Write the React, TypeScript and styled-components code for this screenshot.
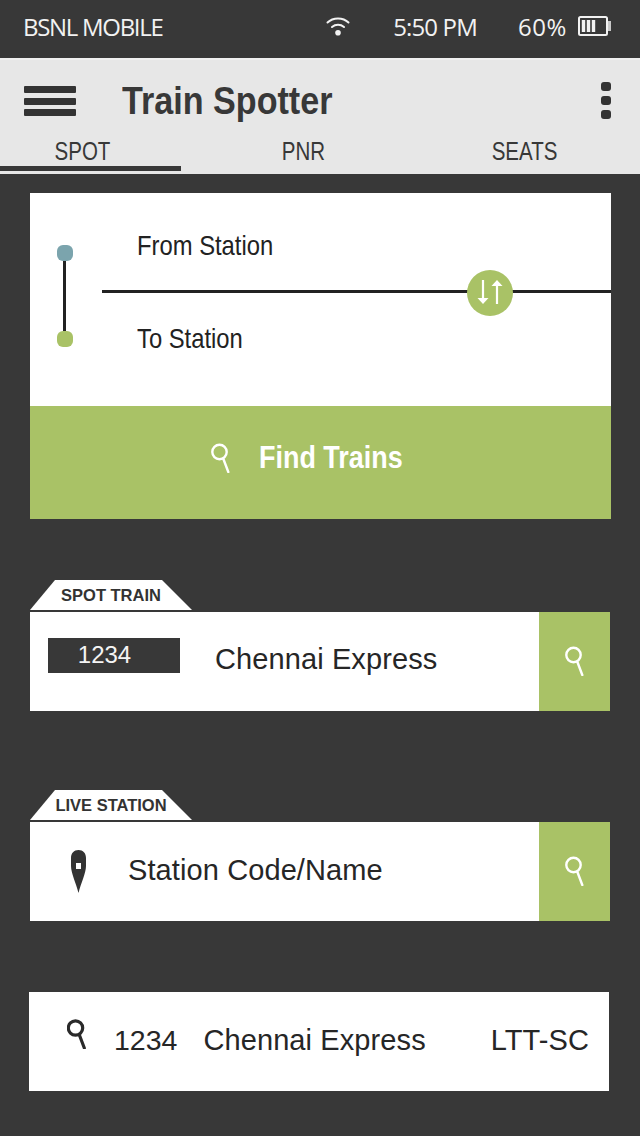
import React from "react";
import styled, { createGlobalStyle } from "styled-components";

const Global = createGlobalStyle`
  html, body { margin: 0; padding: 0; background: #383838; }
  body { font-family: "Liberation Sans", Arial, sans-serif; }
  #root { width: 640px; height: 1136px; overflow: hidden; }
`;

const Page = styled.div`
  width: 640px;
  height: 1136px;
  background: #383838;
  display: flex;
  flex-direction: column;
`;

const StatusBar = styled.div`
  height: 58px;
  display: flex;
  align-items: center;
  padding: 0 29px 6px 23px;
  box-sizing: border-box;
  color: #f2f2f2;
  font-family: "Open Sans", sans-serif;
  font-size: 24px;
`;

const Carrier = styled.span`
  flex: 1;
  letter-spacing: -1.3px;
`;

const StatusText = styled.span<{ $gap: number; $track: number }>`
  margin-left: ${(p) => p.$gap}px;
  letter-spacing: ${(p) => p.$track}px;
`;

const BatteryIcon = styled.svg`
  margin-left: 11px;
`;

const Header = styled.header`
  height: 116px;
  background: #e7e7e7;
  border-top: 2px solid #f0f0f0;
  box-sizing: border-box;
  display: flex;
  flex-direction: column;
`;

const TitleRow = styled.div`
  height: 78px;
  display: flex;
  align-items: center;
  padding: 0 29px 0 24px;
`;

const Burger = styled.div`
  width: 52px;
  height: 30px;
  display: flex;
  flex-direction: column;
  justify-content: space-between;
  margin-top: 4px;
`;

const BurgerBar = styled.span`
  height: 7px;
  background: #333;
  border-radius: 1px;
`;

const Title = styled.h1`
  flex: 1;
  margin: 4px 0 0 46px;
  font-size: 39px;
  line-height: 44px;
  font-weight: 700;
  color: #383838;
  white-space: nowrap;
  transform: scaleX(0.875);
  transform-origin: left center;
`;

const Kebab = styled.div`
  display: flex;
  flex-direction: column;
  gap: 5px;
  margin-top: 2px;
`;

const KebabDot = styled.span`
  width: 10px;
  height: 9px;
  border-radius: 3px;
  background: #333;
`;

const Tabs = styled.div`
  display: grid;
  grid-template-columns: 165px 277px 165px;
  height: 28px;
`;

const TabLabel = styled.span`
  display: block;
  text-align: center;
  font-size: 25px;
  line-height: 26px;
  color: #383838;
  transform: scaleX(0.82);
`;

const TabUnderline = styled.div`
  width: 181px;
  height: 5px;
  background: #383838;
`;

const Content = styled.main`
  display: flex;
  flex-direction: column;
  padding: 19px 29px 0 30px;
`;

const RouteCard = styled.section`
  width: 581px;
  display: flex;
  flex-direction: column;
`;

const RouteFields = styled.div`
  position: relative;
  height: 213px;
  background: #fff;
  display: grid;
  grid-template-columns: 72px 1fr;
  align-items: start;
`;

const Rail = styled.div`
  display: flex;
  flex-direction: column;
  align-items: center;
  width: 16px;
  margin: 52px 0 0 27px;
`;

const RailDot = styled.span<{ $color: string }>`
  width: 16px;
  height: 16px;
  border-radius: 6px;
  background: ${(p) => p.$color};
`;

const RailLine = styled.span`
  width: 3px;
  height: 70px;
  margin-left: -2px;
  background: #222;
`;

const Fields = styled.div`
  display: flex;
  flex-direction: column;
  padding-top: 29px;
`;

const FieldText = styled.div`
  height: 46px;
  margin-left: 35px;
  font-size: 28.5px;
  line-height: 46px;
  color: #222;
  transform: scaleX(0.835);
  transform-origin: left center;
  white-space: nowrap;
`;

const FieldRule = styled.div`
  height: 3px;
  margin: 22px 0;
  background: #222;
`;

const SwapButton = styled.div`
  position: absolute;
  left: 437px;
  top: 77px;
  width: 46px;
  height: 46px;
  border-radius: 50%;
  background: #a9c266;
  display: flex;
  align-items: center;
  justify-content: center;
`;

const FindButton = styled.button`
  height: 113px;
  border: 0;
  padding: 0 0 10px 0;
  background: #a9c266;
  color: #fff;
  display: flex;
  align-items: center;
  justify-content: center;
  font-family: inherit;
`;

const FindLabel = styled.span`
  width: 172px;
  margin-left: 28px;
  font-size: 32px;
  font-weight: 700;
  white-space: nowrap;
  transform: scaleX(0.842);
  transform-origin: left center;
  text-align: left;
`;

const Section = styled.section<{ $top: number }>`
  margin-top: ${(p) => p.$top}px;
  width: 580px;
  display: flex;
  flex-direction: column;
`;

const Tag = styled.div`
  width: 162px;
  height: 30px;
  margin-bottom: 2px;
  background: #fff;
  clip-path: polygon(0 100%, 25px 0, 132px 0, 100% 100%);
  display: flex;
  align-items: center;
  justify-content: center;
  font-size: 16.5px;
  font-weight: 700;
  color: #333;
  padding-top: 1px;
  box-sizing: border-box;
`;

const Row = styled.div`
  height: 99px;
  background: #fff;
  display: flex;
  align-items: center;
`;

const NumberBox = styled.div`
  width: 132px;
  height: 35px;
  margin: 0 35px 13px 18px;
  background: #383838;
  color: #f4f4f4;
  font-size: 24px;
  line-height: 32px;
  text-align: center;
  padding: 1px 19px 0 0;
  box-sizing: border-box;
`;

const RowText = styled.span<{ $dy?: number; $grow?: boolean }>`
  flex: ${(p) => (p.$grow ? 1 : "none")};
  font-size: 29px;
  letter-spacing: 0.1px;
  color: #262626;
  white-space: nowrap;
  margin-bottom: ${(p) => p.$dy ?? 2}px;
`;

const GoButton = styled.div`
  width: 71px;
  height: 99px;
  background: #a9c266;
  display: flex;
  align-items: center;
  justify-content: center;
  padding-bottom: 2px;
  box-sizing: border-box;
`;

const PinSlot = styled.div`
  width: 98px;
  display: flex;
  justify-content: center;
`;

const ResultRow = styled.div`
  margin: 71px 0 0 -1px;
  width: 580px;
  height: 99px;
  background: #fff;
  display: flex;
  align-items: center;
  padding: 0 20px 0 38px;
  box-sizing: border-box;
`;

const ResultIcon = styled.div`
  width: 47px;
  margin-bottom: 12px;
`;

const ResultNumber = styled(RowText)`
  margin-right: 26px;
  font-size: 28.5px;
  letter-spacing: 0;
`;

const Search = ({ color = "#fff", w = 2.4 }: { color?: string; w?: number }) => (
  <svg width="20" height="30" viewBox="0 0 20 30" fill="none">
    <circle cx="8.500" cy="9" r="7.200" stroke={color} strokeWidth={w} />
    <path d="M12.300 15.800 L17.300 29" stroke={color} strokeWidth={w} strokeLinecap="round" />
  </svg>
);

export default function App() {
  return (
    <Page>
      <Global />
      <StatusBar>
        <Carrier>BSNL MOBILE</Carrier>
        <svg width="24" height="20" viewBox="0 0 24 20" fill="none" stroke="#f2f2f2" strokeWidth="2" strokeLinecap="round">
          <path d="M1.500 6.500 C7 1 17 1 22.500 6.500" />
          <path d="M6 11 C9.500 8 14.500 8 18 11" />
          <circle cx="12" cy="16.800" r="2.800" fill="#f2f2f2" stroke="none" />
        </svg>
        <StatusText $gap={43} $track={-0.85}>5:50 PM</StatusText>
        <StatusText $gap={41} $track={0.6}>60%</StatusText>
        <BatteryIcon width="33" height="20" viewBox="0 0 33 20">
          <rect x="1" y="1" width="28" height="18" rx="1.500" fill="none" stroke="#f2f2f2" strokeWidth="2" />
          <rect x="30" y="5" width="3" height="10" fill="#c8c8c8" />
          <path d="M5.500 4v12M10.500 4v12M15.500 4v12" stroke="#f2f2f2" strokeWidth="3.400" />
        </BatteryIcon>
      </StatusBar>
      <Header>
        <TitleRow>
          <Burger>
            <BurgerBar />
            <BurgerBar />
            <BurgerBar />
          </Burger>
          <Title>Train Spotter</Title>
          <Kebab>
            <KebabDot />
            <KebabDot />
            <KebabDot />
          </Kebab>
        </TitleRow>
        <Tabs>
          <TabLabel>SPOT</TabLabel>
          <TabLabel>PNR</TabLabel>
          <TabLabel>SEATS</TabLabel>
        </Tabs>
        <TabUnderline />
      </Header>
      <Content>
        <RouteCard>
          <RouteFields>
            <Rail>
              <RailDot $color="#7ba4ad" />
              <RailLine />
              <RailDot $color="#a9c266" />
            </Rail>
            <Fields>
              <FieldText>From Station</FieldText>
              <FieldRule />
              <FieldText>To Station</FieldText>
            </Fields>
            <SwapButton>
              <svg width="26" height="28" viewBox="0 0 26 28" fill="none" stroke="#fff" strokeWidth="2.200">
                <path d="M6 1v21" />
                <path d="M.5 19h11L6 25z" fill="#fff" stroke="none" />
                <path d="M20 25V5" />
                <path d="M14.500 7h11L20 1z" fill="#fff" stroke="none" />
              </svg>
            </SwapButton>
          </RouteFields>
          <FindButton>
            <Search />
            <FindLabel>Find Trains</FindLabel>
          </FindButton>
        </RouteCard>
        <Section $top={61}>
          <Tag>SPOT TRAIN</Tag>
          <Row>
            <NumberBox>1234</NumberBox>
            <RowText $grow $dy={4}>Chennai Express</RowText>
            <GoButton>
              <Search />
            </GoButton>
          </Row>
        </Section>
        <Section $top={79}>
          <Tag>LIVE STATION</Tag>
          <Row>
            <PinSlot>
              <svg width="16" height="44" viewBox="0 0 16 44">
                <path d="M7.500 0 C12 0 15 3 15 8 L15 16 C15 23 10 33 7.500 43 C5 33 0 23 0 16 L0 8 C0 3 3 0 7.500 0 Z" fill="#333" />
                <rect x="5" y="13" width="5" height="6" fill="#fff" />
              </svg>
            </PinSlot>
            <RowText $grow $dy={2}>Station Code/Name</RowText>
            <GoButton>
              <Search />
            </GoButton>
          </Row>
        </Section>
        <ResultRow>
          <ResultIcon>
            <Search color="#2a2a2a" w={3.200} />
          </ResultIcon>
          <ResultNumber>1234</ResultNumber>
          <RowText $grow>Chennai Express</RowText>
          <RowText>LTT-SC</RowText>
        </ResultRow>
      </Content>
    </Page>
  );
}
